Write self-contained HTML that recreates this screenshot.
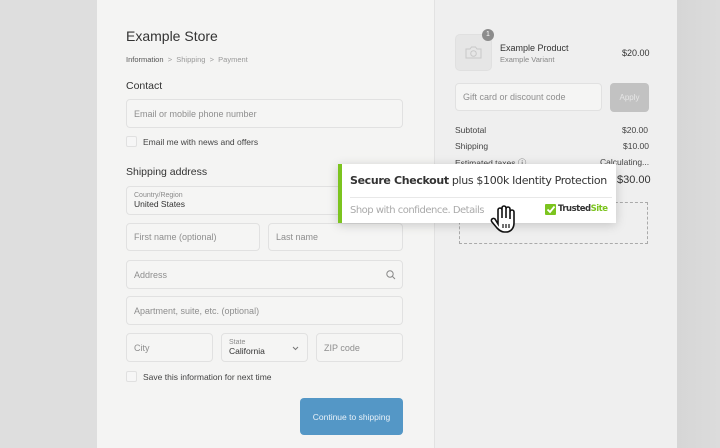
<!DOCTYPE html>
<html><head><style>
*{margin:0;padding:0;box-sizing:border-box}
body{width:720px;height:448px;overflow:hidden;position:relative;background:#dedede;font-family:"Liberation Sans",sans-serif;color:#333}
.a{position:absolute}
.l{left:97px;top:0;width:337px;height:448px;background:#f4f4f3}
.r{left:434px;top:0;width:243px;height:448px;background:#efefef;border-left:1px solid #e2e2e2}
.rr{left:677px;top:0;width:43px;height:448px;background:linear-gradient(90deg,#d6d6d6,#dcdcdc)}
.in{position:absolute;border:1px solid #e1e1e1;border-radius:4px;background:#f5f5f4;font-size:9px;color:#8e8e8e;padding-left:7px;display:flex;align-items:center}
.cb{position:absolute;width:11px;height:11px;border:1px solid #e0e0e0;border-radius:2px;background:#f6f6f6}
.t{position:absolute;font-size:9px;color:#444;white-space:nowrap}
.sm{font-size:7px;color:#8a8a8a}
</style></head><body>
<div class="a l"></div><div class="a r"></div><div class="a rr"></div>

<div class="t" style="left:126px;top:28px;font-size:14px;color:#333">Example Store</div>
<div class="t" style="left:126px;top:55px;font-size:7.5px;color:#555">Information <span style="color:#999">&nbsp;&gt;&nbsp; Shipping &nbsp;&gt;&nbsp; Payment</span></div>
<div class="t" style="left:126px;top:80px;font-size:10.5px;color:#333">Contact</div>
<div class="in" style="left:126px;top:99px;width:277px;height:29px">Email or mobile phone number</div>
<div class="cb" style="left:126px;top:136px"></div>
<div class="t" style="left:143px;top:137px;font-size:8.5px">Email me with news and offers</div>
<div class="t" style="left:126px;top:166px;font-size:10.5px;color:#333">Shipping address</div>
<div class="in" style="left:126px;top:186px;width:277px;height:29px;display:block;padding-top:5px"><div class="sm">Country/Region</div><div style="color:#333;font-size:8.5px">United States</div></div>
<div class="in" style="left:126px;top:223px;width:134px;height:28px">First name (optional)</div>
<div class="in" style="left:268px;top:223px;width:135px;height:28px">Last name</div>
<div class="in" style="left:126px;top:260px;width:277px;height:29px">Address
<svg class="a" style="left:259px;top:9px" width="10" height="10" viewBox="0 0 10 10"><circle cx="4" cy="4" r="3.2" fill="none" stroke="#888" stroke-width="1"/><path d="M6.4 6.4L9 9" stroke="#888" stroke-width="1"/></svg></div>
<div class="in" style="left:126px;top:296px;width:277px;height:29px">Apartment, suite, etc. (optional)</div>
<div class="in" style="left:126px;top:333px;width:87px;height:29px">City</div>
<div class="in" style="left:221px;top:333px;width:87px;height:29px;display:block;padding-top:5px"><div class="sm">State</div><div style="color:#333;font-size:8.5px">California</div>
<svg class="a" style="left:70px;top:12px" width="7" height="5" viewBox="0 0 7 5"><path d="M1 1l2.5 2.5L6 1" fill="none" stroke="#777"/></svg></div>
<div class="in" style="left:316px;top:333px;width:87px;height:29px">ZIP code</div>
<div class="cb" style="left:126px;top:371px"></div>
<div class="t" style="left:143px;top:372px;font-size:8.5px">Save this information for next time</div>
<div class="a" style="left:300px;top:398px;width:103px;height:37px;background:#5497c6;border-radius:4px;color:#e8f1f8;font-size:8.5px;display:flex;align-items:center;justify-content:center">Continue to shipping</div>

<div class="a" style="left:455px;top:34px;width:37px;height:37px;background:#e6e6e6;border:1px solid #e0e0e0;border-radius:5px"></div>
<svg class="a" style="left:465px;top:46px" width="17" height="13" viewBox="0 0 17 13"><path d="M1 3h4l1.5-2h4L12 3h4v9H1z" fill="none" stroke="#c8c8c8"/><circle cx="8.5" cy="7.5" r="2.8" fill="none" stroke="#c8c8c8"/></svg>
<div class="a" style="left:482px;top:29px;width:12px;height:12px;border-radius:50%;background:#8c8c8c;color:#fff;font-size:7px;text-align:center;line-height:12px">1</div>
<div class="t" style="left:500px;top:43px;font-size:9px;color:#333">Example Product</div>
<div class="t" style="left:500px;top:55px;font-size:7.5px;color:#888">Example Variant</div>
<div class="t" style="left:622px;top:48px;font-size:9px;color:#333">$20.00</div>
<div class="in" style="left:455px;top:83px;width:147px;height:28px">Gift card or discount code</div>
<div class="a" style="left:610px;top:83px;width:39px;height:29px;background:#c2c2c2;border-radius:4px;color:#e6e6e6;font-size:8px;display:flex;align-items:center;justify-content:center">Apply</div>
<div class="t" style="left:455px;top:125px;font-size:8.5px">Subtotal</div><div class="t" style="left:622px;top:125px;font-size:8.5px">$20.00</div>
<div class="t" style="left:455px;top:141px;font-size:8.5px">Shipping</div><div class="t" style="left:623px;top:141px;font-size:8.5px">$10.00</div>
<div class="t" style="left:455px;top:157px;font-size:8.5px">Estimated taxes ⓘ</div><div class="t" style="left:600px;top:157px;font-size:8.5px">Calculating...</div>
<div class="t" style="left:617px;top:174px;font-size:11px;color:#333">$30.00</div>
<div class="a" style="left:459px;top:202px;width:189px;height:42px;border:1px dashed #aaa"></div>

<div class="a" style="left:338px;top:164px;width:278px;height:59px;background:#fff;border-left:4px solid #7cc41f;box-shadow:0 2px 10px rgba(0,0,0,0.18)">
<div class="t" style="left:8px;top:10px;font-size:11px;color:#333;font-family:'DejaVu Sans','Liberation Sans',sans-serif;letter-spacing:-0.35px"><b>Secure Checkout</b> plus $100k Identity Protection</div>
<div class="a" style="left:8px;top:33px;width:262px;height:1px;background:#e8e8e8"></div>
<div class="t" style="left:8px;top:41px;font-size:10px;color:#aaa;font-family:'DejaVu Sans','Liberation Sans',sans-serif;letter-spacing:-0.5px">Shop with confidence. Details</div>
<div class="a" style="left:203px;top:40px;width:11px;height:11px;background:#7cc41f;border-radius:1px"></div>
<svg class="a" style="left:204px;top:41px" width="10" height="9" viewBox="0 0 10 9"><path d="M1.5 4.5l2.5 2.5L8.5 1.5" fill="none" stroke="#fff" stroke-width="1.8"/></svg>
<div class="t" style="left:216px;top:40px;font-size:8.5px;font-weight:bold;color:#333;letter-spacing:-0.5px;font-family:'DejaVu Sans',sans-serif">Trusted<span style="color:#7cc41f">Site</span></div>
</div>
<svg class="a" style="left:490px;top:204px" width="28" height="30" viewBox="0 0 28 30"><path d="M8 20V6a2 2 0 014 0v8V4a2 2 0 014 0v10V5a2 2 0 014 0v10V8a2 2 0 014 0v11c0 5-3 9-8 9h-2c-3 0-5-2-7-4l-5-6a2 2 0 013-3z" fill="#fff" stroke="#111" stroke-width="1.6"/><path d="M13 20v4M16 20v4M19 20v4" stroke="#111" stroke-width="1.2"/></svg>
</body></html>
